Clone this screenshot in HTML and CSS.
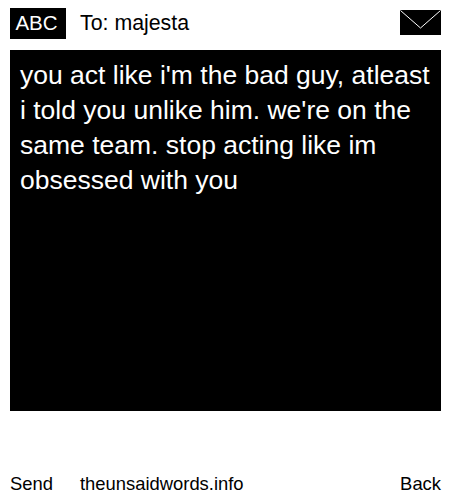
FILE: index.html
```html
<!DOCTYPE html>
<html lang="en">
<head>
<meta charset="utf-8">
<title>To: majesta</title>
<link rel="stylesheet" href="styles.css">
</head>
<body>
<div class="phone">
  <header class="top">
    <span class="abc">ABC</span>
    <span class="to">To: majesta</span>
    <svg class="env" width="41" height="25" viewBox="0 0 41 25">
      <rect width="41" height="25" fill="#000"/>
      <path d="M0.5 0.5 L20.5 18 L40.5 0.5" fill="none" stroke="#fff" stroke-width="1"/>
    </svg>
  </header>
  <main class="msg">you act like i'm the bad guy, atleast i told you unlike him. we're on the same team. stop acting like im obsessed with you</main>
  <footer class="bottom">
    <span class="send">Send</span>
    <span class="site">theunsaidwords.info</span>
    <span class="back">Back</span>
  </footer>
</div>
</body>
</html>
```
FILE: styles.css
```css
html, body {
  margin: 0;
  padding: 0;
  background: #fff;
}
.phone {
  width: 431px;
  height: 500px;
  padding: 0 9px 0 10px;
  display: flex;
  flex-direction: column;
  font-family: "Liberation Sans", Arial, sans-serif;
  color: #000;
}
.top {
  display: flex;
  align-items: flex-start;
  height: 31px;
  padding-top: 8px;
  margin-bottom: 11px;
}
.abc {
  width: 56px;
  height: 31px;
  box-sizing: border-box;
  padding-right: 3px;
  line-height: 29px;
  background: #000;
  color: #fff;
  font-size: 20.5px;
  text-align: center;
}
.to {
  margin-left: 14px;
  font-size: 21.33px;
  line-height: 31px;
}
.env {
  margin-left: auto;
  margin-top: 2px;
  display: block;
}
.msg {
  background: #000;
  color: #fff;
  height: 361px;
  box-sizing: border-box;
  padding: 8px 5px 9px 10px;
  font-size: 26.5px;
  line-height: 35px;
}
.bottom {
  display: flex;
  margin-top: 60px;
  font-size: 18.4px;
  line-height: 26px;
}
.send {
  width: 70px;
}
.back {
  margin-left: auto;
}
```
